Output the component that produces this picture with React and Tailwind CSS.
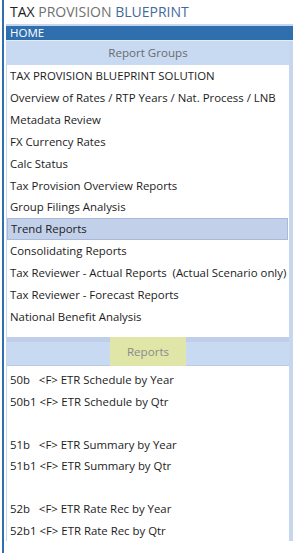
import React from 'react';

const groups = [
  'TAX PROVISION BLUEPRINT SOLUTION',
  'Overview of Rates / RTP Years / Nat. Process / LNB',
  'Metadata Review',
  'FX Currency Rates',
  'Calc Status',
  'Tax Provision Overview Reports',
  'Group Filings Analysis',
  'Trend Reports',
  'Consolidating Reports',
  'Tax Reviewer - Actual Reports  (Actual Scenario only)',
  'Tax Reviewer - Forecast Reports',
  'National Benefit Analysis',
];

const reports = [
  '50b   <F> ETR Schedule by Year',
  '50b1 <F> ETR Schedule by Qtr',
  '',
  '51b   <F> ETR Summary by Year',
  '51b1 <F> ETR Summary by Qtr',
  '',
  '52b   <F> ETR Rate Rec by Year',
  '52b1 <F> ETR Rate Rec by Qtr',
];

const App = () => {
  return (
    <div
      className="flex w-[293px] h-[553px] bg-white overflow-hidden text-[#1c1c1c]"
      style={{ fontFamily: '"Open Sans", "Noto Sans", sans-serif' }}
    >
      <div className="w-[2px] shrink-0" />
      <div className="w-[2px] shrink-0 bg-[#2f6fad]" />
      <div className="flex-1 min-w-0 flex flex-col pl-[2px]">
        <div className="h-[24px] pl-[4px] pt-[3px] text-[14px] leading-[18px] whitespace-pre">
          <span className="text-[#222]">TAX </span>
          <span className="text-[#6f6f6f]">PROVISION </span>
          <span className="text-[#3f6a9c]">BLUEPRINT</span>
        </div>
        <div className="h-[2px] bg-[#c6d6ef]" />
        <div className="h-[14px] bg-[#2f6fad] text-white text-[11.5px] leading-[14px] pl-[4px]">HOME</div>
        <div className="h-[1px] bg-[#e4ecf8]" />
        <div className="flex border-l border-[#c6d6ef]">
          <div className="flex-1 min-w-0 flex flex-col">
            <div className="h-[24px] bg-[#c8d9f2] text-[#6b6b6b] text-[11.6px] flex items-center justify-center">
              Report Groups
            </div>
            <div className="flex flex-col pb-[10px] pr-[1px]">
              {groups.map((g) => (
                <div
                  key={g}
                  className={
                    'h-[21.85px] shrink-0 flex items-center pl-[3px] text-[11.4px] whitespace-pre ' +
                    (g === 'Trend Reports' ? 'bg-[#c3d0e9] border border-[#a9b9d9] pl-[2px]' : '')
                  }
                >
                  {g}
                </div>
              ))}
            </div>
            <div className="h-[5px] bg-[#bfcfe9]" />
            <div className="h-[24px] bg-[#c8d9f2] border-b border-[#b9cae6] flex justify-center">
              <div className="w-[76px] -mt-[5px] h-[29px] bg-[#dfe6a8] text-[#8b8b8b] text-[11.6px] flex items-center justify-center">
                Reports
              </div>
            </div>
            <div className="flex flex-col pt-[3px] flex-1">
              {reports.map((r, i) => (
                <div key={i} className="h-[21.5px] shrink-0 flex items-center pl-[3px] text-[11.4px] whitespace-pre">
                  {r}
                </div>
              ))}
            </div>
          </div>
          <div className="w-[4px] shrink-0 bg-[#c6d6ef]" />
        </div>
      </div>
    </div>
  );
};

export default App;
